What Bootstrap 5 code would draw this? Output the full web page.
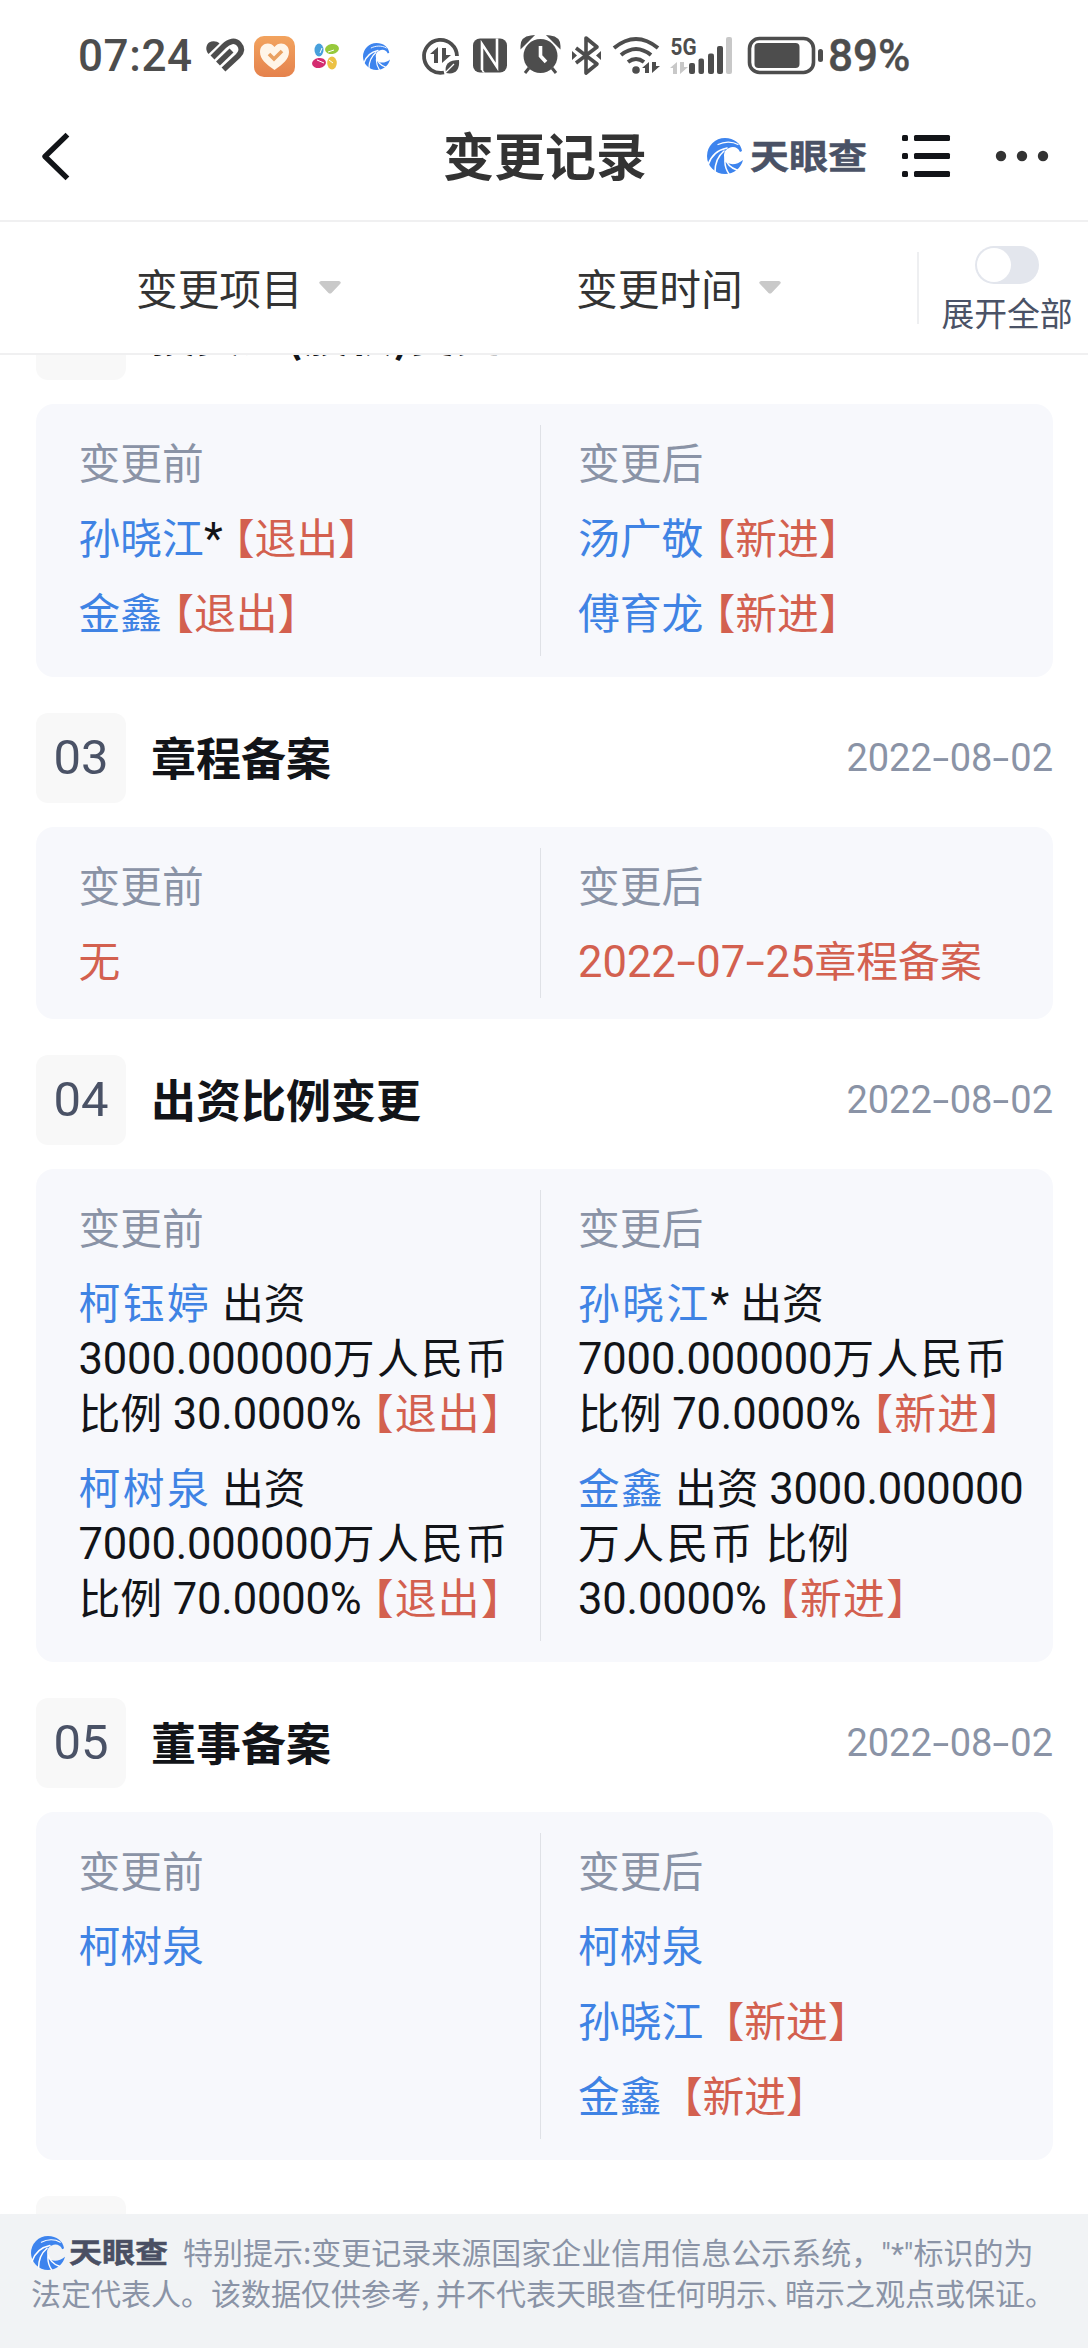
<!DOCTYPE html>
<html lang="zh-CN">
<head>
<meta charset="utf-8">
<meta name="viewport" content="width=device-width, initial-scale=1">
<title>变更记录</title>
<link href="https://cdn.jsdelivr.net/npm/bootstrap@5.3.0/dist/css/bootstrap.min.css" rel="stylesheet">
<style>
body{font-family:Roboto,"Noto Sans CJK SC",sans-serif;color:#121418;background:#fff}
.screen{width:1088px;height:2348px}
.statusbar{height:91px;padding-top:21px}
.statusbar svg,.topbar svg{display:block;flex:none}
.clock,.level{font:500 44px/70px Roboto,sans-serif;color:#4d4d4d;white-space:nowrap}
.clock{width:122px;padding-left:78px;box-sizing:content-box;letter-spacing:.6px}
.level{-webkit-text-stroke:.4px #4d4d4d;padding-left:4px}
.topbar{height:131px;border-bottom:2px solid #f0f0f1}
.topbar h1{font:700 51px/60px "Noto Sans CJK SC",sans-serif;color:#333;width:204px;white-space:nowrap;padding-bottom:3px}
.brandword{font:700 39px/36px "Noto Sans CJK SC",sans-serif;color:#4a5266;transform:translateY(-2px) scaleY(.87);display:inline-block;white-space:nowrap;-webkit-text-stroke:.6px #4a5266}
.filters{height:133px;border-bottom:2px solid #f0f0f1;background:#fff;position:relative;z-index:2}
.filters .pick{font:400 41.7px/60px "Noto Sans CJK SC",sans-serif;color:#333;flex:none;padding-bottom:2px}
.pick svg{position:relative;top:1px}
.pick-item{width:440px;padding-left:136px}
.pick-time{width:477px;padding-left:136px}
.toggle-cell{width:169px;flex:none;padding:3px 0 0 7px;font:400 32.8px/40px "Noto Sans CJK SC",sans-serif;color:#4a5266;white-space:nowrap}
.vline{width:2px;height:72px;background:#eeeff1;flex:none}
.knob-track{width:64px;height:38px;border-radius:19px;background:#e3e6ed;padding:2px}
.knob{width:34px;height:34px;border-radius:50%;background:#fff}
.records{height:1859px;padding:0 35px 0 36px;overflow:hidden}
.record-head{height:90px;margin-bottom:24px}
.num{width:90px;height:90px;border-radius:12px;background:#f8f8f8;color:#4a5266;font-size:49px;line-height:90px}
.rtitle{font:700 45px/60px "Noto Sans CJK SC",sans-serif;padding:0 0 3px 25px;white-space:nowrap}
.first .rtitle{padding-bottom:5px}
.rdate{font-size:38px;line-height:60px;color:#8a93a6}
.hy{display:inline-block;width:.47em;text-align:center;transform:scaleX(1.6)}
.first{margin-top:-65px}
.diff{background:#f7f8fc;border-radius:18px;margin-bottom:36px;padding:30px 0 38px 42.500px;position:relative}
.diff.short{padding-bottom:32px}
.diff::after{content:"";position:absolute;left:504px;top:21px;bottom:21px;width:1px;background:#dfe1e6}
.side{width:499.500px;font-size:41.8px;line-height:55px;white-space:nowrap;font-family:"Noto Sans CJK SC",sans-serif}
.side.w-r{width:460px}
.side p{margin:20px 0 0}
.side p>span{display:block;height:55px}
.side i{font-style:normal;font-family:Roboto,sans-serif;font-size:43.5px;line-height:1}
.dg{letter-spacing:-.15px}
.cap{color:#8a93a6}
.nm{color:#3f83e4;font-weight:400}
.tg{color:#d3604f;font-weight:400;margin-left:11px;font-feature-settings:"halt"}
.tg0{margin-left:20px}
.redtext{color:#d3604f}
.s2{letter-spacing:1.3px}.s3{letter-spacing:2.4px}
.notice{height:134px;background:#f1f3f5;padding:18px 0 0 31px;font:400 30px/39px "Noto Sans CJK SC",sans-serif;color:#8a93a6;white-space:nowrap}
.notice .brandword{font-size:33px;line-height:30px;color:#4a4f63}
.notice .lead-in{padding-left:15px}
.notice q{quotes:none;font-family:Roboto,sans-serif}
.tight{font-feature-settings:"halt";margin-right:4px}
</style>
<script src="https://cdn.jsdelivr.net/npm/bootstrap@5.3.0/dist/js/bootstrap.bundle.min.js"></script>
</head>
<body>
<svg width="0" height="0" class="position-absolute">
  <symbol id="swirl" viewBox="0 0 36 36">
    <path fill="#3d84ee" d="M18 0C27 0 34 5.500 35 13L33 14C31 9 26 8 22 10C17 12 16 17 18 22C20 27 29 28 36 22C34 30 27 36 18 36A18 18 0 0 1 18 0Z"/>
    <g fill="none" stroke="#fff" stroke-linecap="round"><path stroke-width="1.200" d="M11 6.500C17 3.500 25 3 31 6.500"/><path stroke-width="1.700" d="M1 27C4 18 10 12 20 10"/><path stroke-width="1.600" d="M8 34C8 25 11 18 17 13"/><path stroke-width="1.500" d="M18 21C17.500 26 18.500 31 22 36M18 20C20 27 24 30 30 32"/></g>
  </symbol>
</svg>
<div class="screen d-flex flex-column overflow-hidden">
  <div class="statusbar d-flex">
    <div class="clock">07:24</div>
    <svg width="200" height="70" viewBox="200 21 200 70">
      <path fill="#4d4d4d" d="M208.500 54C205 50 206 45 209 42.500C212.500 40.500 217 41 219.500 43.500Z"/>
      <g fill="none" stroke="#4d4d4d" stroke-width="5.600"><path d="M212.500 57.500L224 46C229 41 235 39.500 239 44C243.500 49 241 53 238 56L223.500 69.500"/><path d="M218 63.500L231.500 50.500"/></g>
      <defs><linearGradient id="og" x2="0" y2="1"><stop stop-color="#f2a35e"/><stop offset="1" stop-color="#e5824d"/></linearGradient></defs>
      <rect x="254" y="36" width="41" height="41" rx="10" fill="url(#og)"/>
      <path fill="#fff5e8" d="M274.500 70C266 64 260 59 260 52C260 43 270 41 274.500 47C279 41 289 43 289 52C289 59 283 64 274.500 70Z"/>
      <path d="M269 54l5 5 8-8" fill="none" stroke="#e9a060" stroke-width="3.600"/>
      <ellipse cx="319" cy="50" rx="4.500" ry="6.500" fill="#48a0dc"/><ellipse cx="332" cy="49" rx="7" ry="5" fill="#97c93c" transform="rotate(-8 332 49)"/><ellipse cx="319" cy="63" rx="7" ry="5" fill="#d42c70" transform="rotate(-8 319 63)"/><ellipse cx="332" cy="63" rx="4.800" ry="6.500" fill="#ecc144"/>
      <path d="M320 53l2-5M328 52l6-2M317 60l7 3M329 60l4 3" stroke="#fff" stroke-width="1"/>
      <use href="#swirl" x="363" y="43" width="27" height="27"/>
    </svg>
    <svg width="424" height="70" viewBox="400 21 424 70">
      <defs><clipPath id="nfc"><rect x="473" y="38.500" width="34" height="34" rx="7"/></clipPath></defs>
      <g fill="#4d4d4d">
        <path d="M444 72.500A16.500 16.500 0 1 1 457 56" fill="none" stroke="#4d4d4d" stroke-width="3.800"/>
        <path d="M430 54l8-7v16h-4v-9zM442 48v15l9-8h-5v-7z"/>
        <path d="M446 73C444 64 449 60 459 60C460 70 455 75 446 73Z"/><path d="M445 73L454 64" stroke="#fff" stroke-width="1.300"/>
        <rect x="473" y="38.500" width="34" height="34" rx="7"/>
        <g clip-path="url(#nfc)" fill="none" stroke="#fff"><path stroke-width="2.600" d="M482 70V44L497 67V38"/><path stroke-width="1.600" d="M485 74L482 70"/></g>
        <circle cx="540.500" cy="56" r="17"/><path d="M522 46q0-8 9-9zM559 46q0-8-9-9zM529 68l-4 5M552 68l4 5" stroke="#4d4d4d" stroke-width="3"/>
        <path d="M540.500 46v10l5.500 6" fill="none" stroke="#fff" stroke-width="3.600"/>
        <path d="M576 48l21 16-11 9V38l11 9-21 16" fill="none" stroke="#4d4d4d" stroke-width="3.600" stroke-linejoin="round"/><path d="M572 51l5 4.500-5 4.500zM601 51l-5 4.500 5 4.500z"/>
        <g fill="none" stroke="#4d4d4d" stroke-width="4"><path d="M614 48Q636 30 658 48"/><path d="M621 55Q636 43 651 55"/><path d="M628 62Q636 56 644 62"/></g><circle cx="636" cy="70" r="3.800"/>
        <path d="M642 68l7-6v11h-4v-5zM652 62v11l8-7h-4v-4z"/>
        <text x="670.500" y="54.500" font-family="Roboto" font-weight="700" font-size="24.500" textLength="26" lengthAdjust="spacingAndGlyphs">5G</text>
        <path fill="#c8c8c8" d="M670 68l7-6v12h-4v-6zM680 62v12l8-7h-4v-5z"/>
        <rect x="689" y="63" width="6" height="11" rx="2"/><rect x="698.500" y="58.500" width="5.500" height="15.500" rx="2"/><rect x="708" y="53.500" width="6" height="20.500" rx="2"/><rect x="717" y="46" width="6" height="28" rx="2"/><rect x="726" y="37" width="6" height="37" rx="2" fill="#c8c8c8"/>
        <rect x="749.500" y="38.500" width="64" height="34" rx="10" fill="none" stroke="#4d4d4d" stroke-width="3.600"/><rect x="754.500" y="43" width="45" height="25" rx="4"/><rect x="818" y="49" width="5" height="13" rx="2.500"/>
      </g>
    </svg>
    <div class="level">89%</div>
  </div>
  <header class="topbar d-flex align-items-center">
    <svg width="443" height="60" viewBox="0 0 443 60"><path d="M65.500 10.500L45 30.500l20.500 20" fill="none" stroke="#121418" stroke-width="5.400" stroke-linejoin="round" stroke-linecap="square"/></svg>
    <h1 class="m-0">变更记录</h1>
    <svg width="36" height="36" class="ms-5" viewBox="-12 0 36 36" overflow="visible"><use href="#swirl" width="36" height="36"/></svg>
    <span class="brandword" style="margin-left:19px">天眼查</span>
    <svg width="200" height="60" viewBox="867 126 200 60"><g fill="#121418"><rect x="902" y="135" width="6" height="6" rx="1.500"/><rect x="902" y="153" width="6" height="6" rx="1.500"/><rect x="902" y="171" width="6" height="6" rx="1.500"/><rect x="914" y="135" width="36" height="6" rx="1.500"/><rect x="914" y="153" width="36" height="6" rx="1.500"/><rect x="914" y="171" width="36" height="6" rx="1.500"/></g><g fill="#333"><circle cx="1001" cy="156" r="5.200"/><circle cx="1022" cy="156" r="5.200"/><circle cx="1043" cy="156" r="5.200"/></g></svg>
  </header>
  <div class="filters d-flex align-items-center flex-shrink-0">
    <div class="pick pick-item d-flex align-items-center">变更项目<svg class="ms-3" width="22" height="13"><path fill="#c9c9c9" d="M2 0H20Q23 1 21 3L12.500 12Q11 13 9.500 12L1 3Q-1 1 2 0Z"/></svg></div>
    <div class="pick pick-time d-flex align-items-center">变更时间<svg class="ms-3" width="22" height="13"><path fill="#c9c9c9" d="M2 0H20Q23 1 21 3L12.500 12Q11 13 9.500 12L1 3Q-1 1 2 0Z"/></svg></div>
    <div class="vline"></div>
    <div class="toggle-cell d-flex flex-column align-items-center"><div class="knob-track"><div class="knob"></div></div><div class="mt-2">展开全部</div></div>
  </div>
  <main class="records flex-shrink-0">
    <div class="record-head first d-flex align-items-center"><div class="num"></div><div class="rtitle">投资人(股权)变更</div></div>
    <section class="diff d-flex">
      <div class="side"><div class="cap">变更前</div><p><span><b class="nm">孙晓江</b><i>*</i><b class="tg">【退出】</b></span></p><p><span><b class="nm">金鑫</b><b class="tg">【退出】</b></span></p></div>
      <div class="side w-r"><div class="cap">变更后</div><p><span><b class="nm">汤广敬</b><b class="tg">【新进】</b></span></p><p><span><b class="nm">傅育龙</b><b class="tg">【新进】</b></span></p></div>
    </section>
    <div class="record-head d-flex align-items-center"><div class="num text-center">03</div><div class="rtitle">章程备案</div><div class="rdate ms-auto">2022<span class="hy">-</span>08<span class="hy">-</span>02</div></div>
    <section class="diff short d-flex">
      <div class="side"><div class="cap">变更前</div><p><span class="redtext">无</span></p></div>
      <div class="side w-r"><div class="cap">变更后</div><p><span class="redtext"><i>2022<span class="hy">-</span>07<span class="hy">-</span>25</i>章程备案</span></p></div>
    </section>
    <div class="record-head d-flex align-items-center"><div class="num text-center">04</div><div class="rtitle">出资比例变更</div><div class="rdate ms-auto">2022<span class="hy">-</span>08<span class="hy">-</span>02</div></div>
    <section class="diff d-flex">
      <div class="side"><div class="cap">变更前</div>
        <p><span><b class="nm s3">柯钰婷</b><i> </i>出资</span><span><i class="dg">3000.000000</i><b class="fw-normal s3">万人民币</b></span><span>比例<i class="dg"> 30.0000%</i><b class="tg s2">【退出】</b></span></p>
        <p><span><b class="nm s3">柯树泉</b><i> </i>出资</span><span><i class="dg">7000.000000</i><b class="fw-normal s3">万人民币</b></span><span>比例<i class="dg"> 70.0000%</i><b class="tg s2">【退出】</b></span></p></div>
      <div class="side w-r"><div class="cap">变更后</div>
        <p><span><b class="nm s3">孙晓江</b><i>* </i>出资</span><span><i class="dg">7000.000000</i><b class="fw-normal s3">万人民币</b></span><span>比例<i class="dg"> 70.0000%</i><b class="tg s2">【新进】</b></span></p>
        <p><span><b class="nm s2">金鑫</b><i> </i>出资<i class="dg"> 3000.000000</i></span><span><b class="fw-normal s3">万人民币</b><i> </i>比例</span><span><i class="dg">30.0000%</i><b class="tg s2">【新进】</b></span></p></div>
    </section>
    <div class="record-head d-flex align-items-center"><div class="num text-center">05</div><div class="rtitle">董事备案</div><div class="rdate ms-auto">2022<span class="hy">-</span>08<span class="hy">-</span>02</div></div>
    <section class="diff d-flex">
      <div class="side"><div class="cap">变更前</div><p><span><b class="nm">柯树泉</b></span></p></div>
      <div class="side w-r"><div class="cap">变更后</div><p><span><b class="nm">柯树泉</b></span></p><p><span><b class="nm">孙晓江</b><b class="tg tg0">【新进】</b></span></p><p><span><b class="nm">金鑫</b><b class="tg tg0">【新进】</b></span></p></div>
    </section>
    <div class="record-head"><div class="num"></div></div>
  </main>
  <footer class="notice flex-shrink-0">
    <div class="d-flex align-items-center"><svg width="34" height="34"><use href="#swirl" width="34" height="34"/></svg><span class="brandword ms-1">天眼查</span><span class="lead-in">特别提示:变更记录来源国家企业信用信息公示系统，<q>"*"</q>标识的为</span></div>
    <div>法定代表人。该数据仅供参考, 并不代表天眼查任何明示<span class="tight">、</span>暗示之观点或保证。</div>
  </footer>
</div>
</body>
</html>
